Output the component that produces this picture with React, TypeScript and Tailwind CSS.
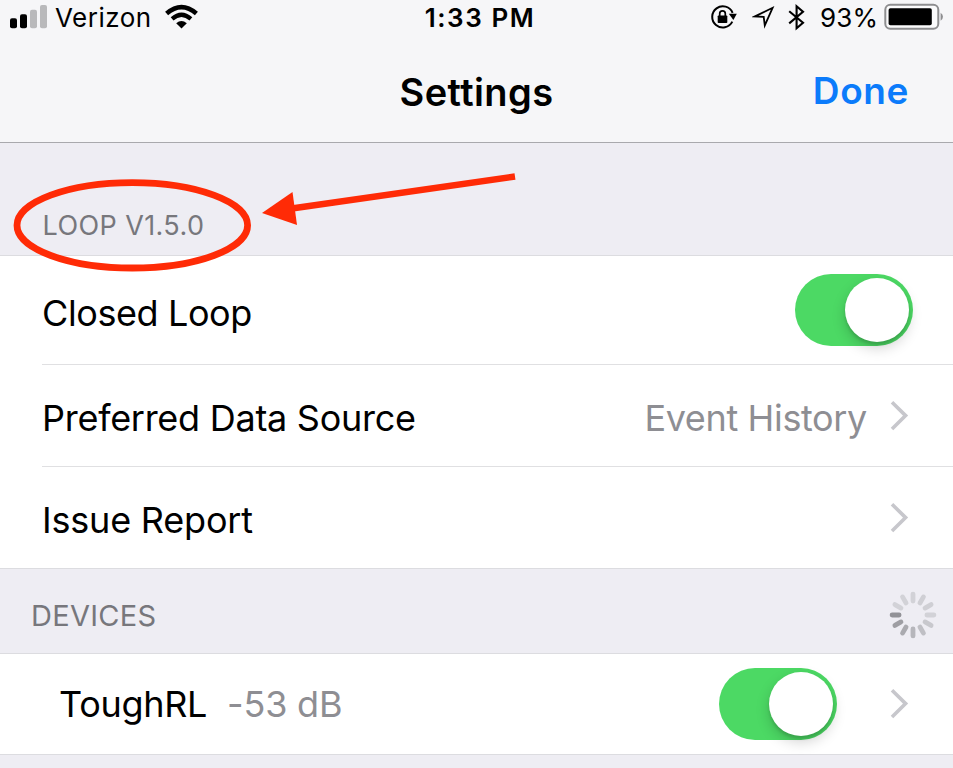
import type { ReactNode } from "react";

function Signal() {
  return (
    <svg className="ml-[9px] h-[36px] w-[39px] shrink-0" viewBox="0 0 39 36">
      <rect x="1" y="18.3" width="7" height="10" rx="2" fill="#000" />
      <rect x="11" y="14.3" width="7" height="14" rx="2" fill="#000" />
      <rect x="21" y="9.7" width="7" height="18.6" rx="2" fill="#b9b9bb" />
      <rect x="31" y="5" width="7" height="23.3" rx="2" fill="#b9b9bb" />
    </svg>
  );
}

function Wifi() {
  return (
    <svg className="h-[36px] w-[34px] shrink-0" viewBox="0 0 34 36" fill="none" stroke="#000">
      <path d="M1.6 13.6 Q16.5 0.8 31.4 13.6" strokeWidth="4.6" />
      <path d="M7.1 18.9 Q16.5 10.5 25.9 18.9" strokeWidth="4.2" />
      <path d="M11.2 23.2 Q16.5 18.6 21.8 23.2 L16.5 28.4Z" fill="#000" stroke="none" />
    </svg>
  );
}

function RotationLock() {
  return (
    <svg className="h-[36px] w-[28px] shrink-0" viewBox="0 0 28 36" fill="none" stroke="#000">
      <path d="M22.3 21.6 A10.6 10.6 0 1 1 22.6 12.8" strokeWidth="2" />
      <path d="M18.8 13.8 L26.8 13.8 L23.4 20Z" fill="#000" stroke="none" />
      <rect x="7.7" y="15.4" width="9.6" height="7.6" rx="0.8" fill="#000" stroke="none" />
      <path d="M9.7 16 V13.6 a2.8 2.8 0 0 1 5.6 0 V16" strokeWidth="1.7" />
    </svg>
  );
}

function LocationArrow() {
  return (
    <svg className="h-[36px] w-[24px] shrink-0" viewBox="0 0 24 36" fill="none" stroke="#000">
      <path d="M3 16.4 L20.6 7.8 L12.8 25.4 L11.7 16.9Z" strokeWidth="1.8" strokeLinejoin="miter" />
    </svg>
  );
}

function Bluetooth() {
  return (
    <svg className="h-[36px] w-[18px] shrink-0" viewBox="0 0 18 36" fill="none" stroke="#000">
      <path d="M1.2 11.2 L15 22.8 L8.6 28.2 V6.2 L15 11.7 L1.2 23.4" strokeWidth="2.1" />
    </svg>
  );
}

function Battery() {
  return (
    <svg className="h-[36px] w-[62px] shrink-0" viewBox="0 0 62 36">
      <rect x="1.3" y="4.8" width="53" height="24" rx="5" fill="#fff" fillOpacity="0.5" stroke="#8e8e90" strokeWidth="2" />
      <rect x="4.6" y="8.3" width="43.2" height="17" rx="1.8" fill="#000" />
      <path d="M56.6 12.8 a4.6 4.6 0 0 1 0 8Z" fill="#8e8e90" />
    </svg>
  );
}

function Chevron() {
  return (
    <svg className="h-[32px] w-[20px] shrink-0" viewBox="0 0 20 32" fill="none">
      <path d="M2 2.2 L15.6 15.6 L2 29" stroke="#c7c7cc" strokeWidth="3.6" />
    </svg>
  );
}

function Toggle() {
  return (
    <div className="flex h-[72px] w-[118px] shrink-0 items-center justify-end rounded-full bg-[#4cd964] pr-[4px]">
      <div className="size-[64px] rounded-full bg-white shadow-[0_6px_14px_rgba(0,0,0,0.18),0_3px_3px_rgba(0,0,0,0.12)]" />
    </div>
  );
}

const SPOKES = ["#d2d2d7", "#cfcfd4", "#cfcfd4", "#d2d2d7", "#c8c8cd", "#bfbfc4", "#b6b6bb", "#aaaaaf", "#9e9ea3", "#929297", "#d2d2d7", "#d2d2d7"];

function Spinner() {
  return (
    <svg className="size-[48px] shrink-0" viewBox="-24 -24 48 48">
      {SPOKES.map((color, i) => (
        <rect key={i} x="-2.4" y="-23.3" width="4.8" height="11.8" rx="2.4" fill={color} transform={`rotate(${i * 30})`} />
      ))}
    </svg>
  );
}

function Row({ children, className }: { children: ReactNode; className: string }) {
  return <div className={`flex items-center bg-white ${className}`}>{children}</div>;
}

function Annotation() {
  return (
    <svg className="pointer-events-none absolute left-0 top-0 h-[300px] w-[530px]" viewBox="0 0 530 300" fill="none">
      <ellipse cx="132.3" cy="225.3" rx="115.3" ry="42.7" stroke="#ff2b06" strokeWidth="6.8" />
      <path d="M515 176.5 L290 208.8" stroke="#ff2b06" strokeWidth="6.6" />
      <path d="M262 213 L292.5 192 L297 225Z" fill="#ff2b06" />
    </svg>
  );
}

export default function App() {
  return (
    <div className="relative h-[768px] w-[953px] overflow-hidden bg-[#eeedf3] font-['Inter',sans-serif] leading-none text-black">
      <header className="h-[143px] border-b border-[#a9a9ad] bg-[#f6f6f8]">
        <div className="grid h-[36px] grid-cols-[400px_160px_1fr]">
          <div className="flex h-[36px] items-center">
            <Signal />
            <span className="ml-[7px] w-[110px] whitespace-nowrap text-[26px] tracking-[0.5px]">Verizon</span>
            <Wifi />
          </div>
          <div className="flex h-[36px] items-center justify-center text-[26px] font-semibold tracking-[1.55px]">1:33 PM</div>
          <div className="flex h-[36px] items-center">
            <div className="ml-[150px] flex w-[110px]">
              <RotationLock />
              <div className="ml-[14px] flex"><LocationArrow /></div>
              <div className="ml-[12px] flex"><Bluetooth /></div>
            </div>
            <span className="w-[64px] shrink-0 whitespace-nowrap text-[26px] tracking-[0.2px]">93%</span>
            <Battery />
          </div>
        </div>
        <div className="grid h-[106px] grid-cols-[1fr_auto_1fr] items-center pt-[6px]">
          <span />
          <h1 className="text-[38px] font-semibold tracking-[0.4px]">Settings</h1>
          <button className="justify-self-end pr-[44px] pb-[3px] text-[37px] font-semibold tracking-[0.6px] text-[#0b7bfb]">Done</button>
        </div>
      </header>

      <section>
        <h2 className="flex h-[113px] items-center border-b border-[#dcdce0] pl-[42.5px] pt-[52px] text-[27px] tracking-[0.4px] text-[#77777c]">LOOP V1.5.0</h2>
        <Row className="h-[108px] pl-[42px] pr-[40px]">
          <span className="grow pt-[5px] text-[36px] tracking-[-0.4px]">Closed Loop</span>
          <Toggle />
        </Row>
        <Row className="h-[102px]">
          <div className="ml-[42px] flex h-full grow items-center border-t border-[#e0e0e2] pr-[43px]">
            <span className="grow pt-[5px] text-[36px] tracking-[-0.27px]">Preferred Data Source</span>
            <span className="mr-[23px] pt-[5px] text-[36px] tracking-[-0.35px] text-[#8e8e93]">Event History</span>
            <Chevron />
          </div>
        </Row>
        <Row className="h-[102px]">
          <div className="ml-[42px] flex h-full grow items-center border-t border-[#e0e0e2] pr-[43px]">
            <span className="grow pt-[5px] text-[36px] tracking-[-0.2px]">Issue Report</span>
            <Chevron />
          </div>
        </Row>
      </section>

      <section>
        <div className="flex h-[86px] items-center justify-between border-y border-[#dcdce0] pl-[31px] pr-[16px] pt-[8px]">
          <h2 className="text-[29px] tracking-[0.3px] text-[#77777c]">DEVICES</h2>
          <Spinner />
        </div>
        <Row className="h-[101px] border-b border-[#dcdce0] pb-[1px] pl-[59px] pr-[43px]">
          <span className="text-[36px] tracking-[-0.3px]">ToughRL</span>
          <span className="ml-[20px] grow text-[36px] tracking-[-0.2px] text-[#8e8e93]">-53 dB</span>
          <Toggle />
          <div className="ml-[53px] flex"><Chevron /></div>
        </Row>
      </section>

      <Annotation />
    </div>
  );
}
